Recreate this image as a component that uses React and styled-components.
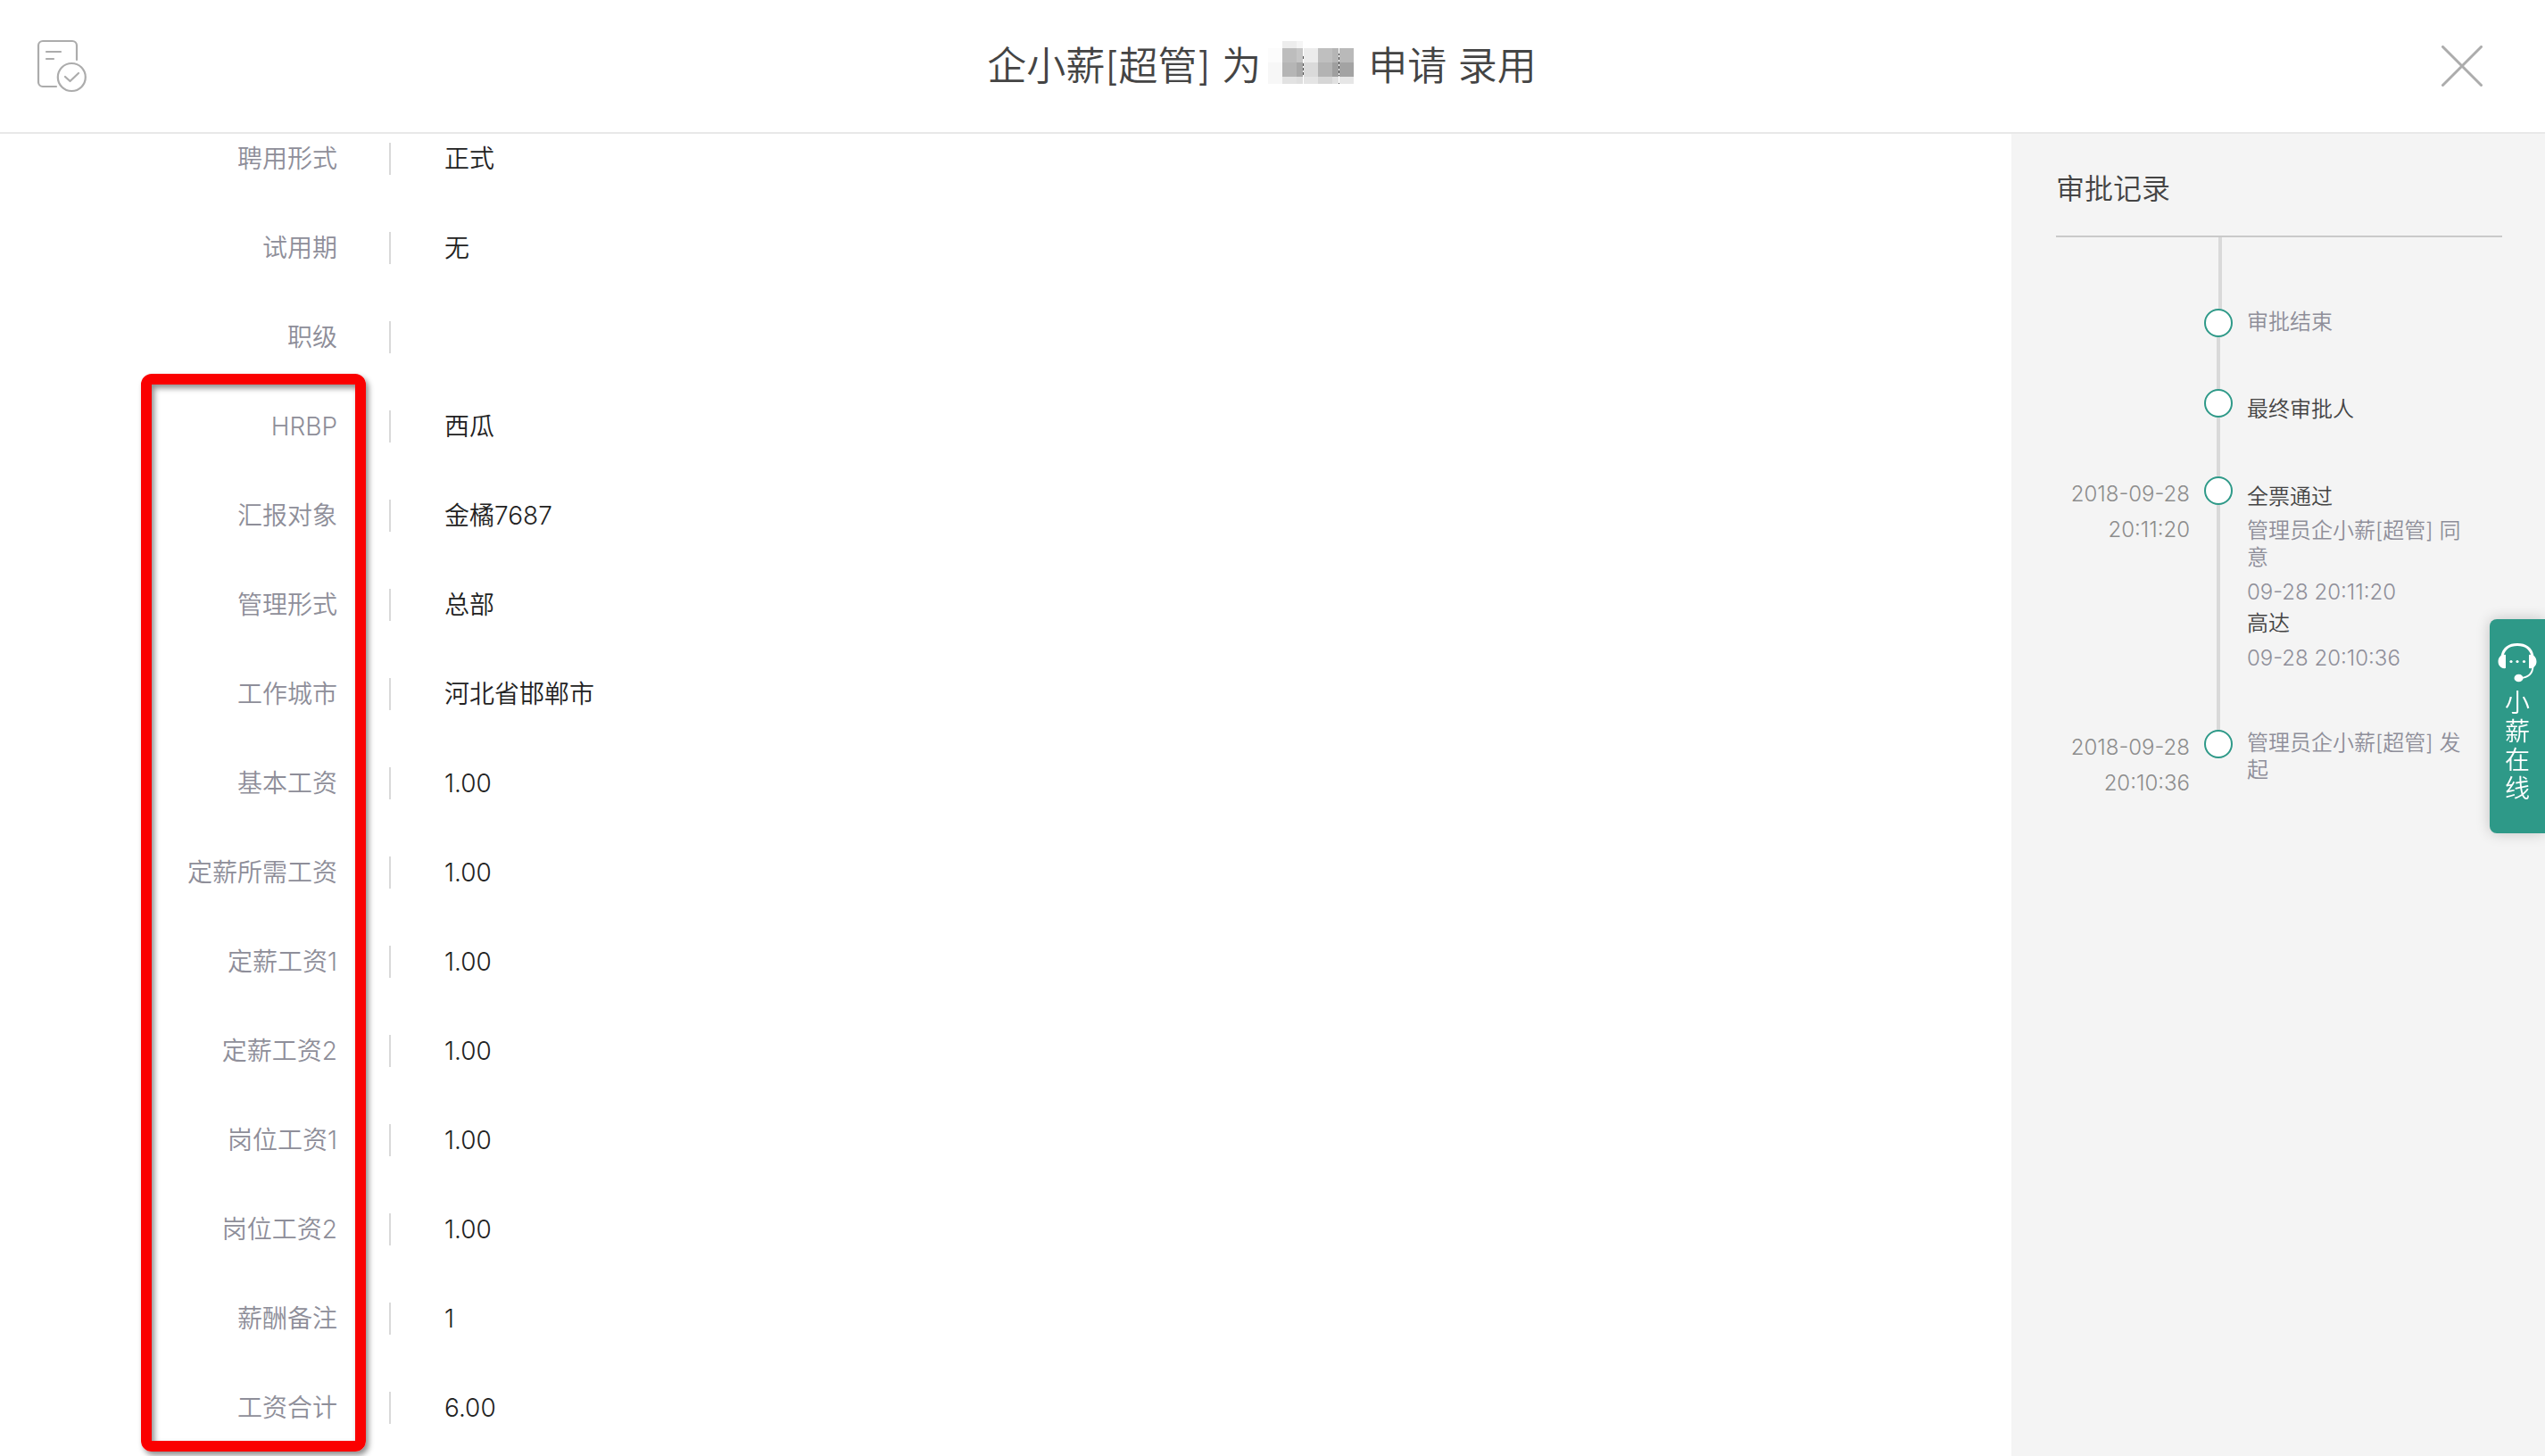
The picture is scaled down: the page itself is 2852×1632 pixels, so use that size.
import React from 'react';
import styled, { createGlobalStyle } from 'styled-components';

const GlobalStyle = createGlobalStyle`
  * {
    box-sizing: border-box;
  }

  body {
    margin: 0;
    background: #fff;
    color: #222;
    font-family: Inter, 'Noto Sans CJK SC', sans-serif;
    font-size: 28px;
    font-weight: 350;
  }
`;

const Page = styled.div`
  display: flex;
  flex-direction: column;
  min-height: 100vh;
`;

const Header = styled.header`
  display: flex;
  align-items: center;
  height: 150px;
  padding: 0 70px 0 40px;
  border-bottom: 2px solid #e8e8e8;
`;

const IconButton = styled.button`
  display: flex;
  padding: 0;
  border: 0;
  background: none;
  color: #acacac;
  cursor: pointer;
`;

const Title = styled.h1`
  display: flex;
  flex: 1;
  align-items: center;
  justify-content: center;
  gap: 8px;
  margin: 0;
  padding-right: 8px;
  color: #444;
  font-size: 44px;
  font-weight: 350;
  line-height: 60px;
`;

const Mask = styled.svg`
  margin: 0 8px 8px 0;
`;

const Body = styled.div`
  display: flex;
  flex: 1;
`;

const Main = styled.main`
  display: flex;
  flex: 1;
  flex-direction: column;
  gap: 64px;
  padding-top: 10px;
`;

const FieldList = styled.dl`
  position: relative;
  display: flex;
  flex-direction: column;
  gap: 64px;
  margin: 0;
`;

const Field = styled.div`
  display: flex;
  height: 36px;
  line-height: 36px;
`;

const FieldLabel = styled.dt`
  width: 438px;
  padding-right: 58px;
  border-right: 2px solid #d9d9d9;
  color: #8e8e99;
  text-align: right;
`;

const FieldValue = styled.dd`
  margin: 0 0 0 60px;
`;

const Highlight = styled.div`
  position: absolute;
  top: -41px;
  bottom: -31px;
  left: 158px;
  width: 252px;
  border: 12px solid #fa0000;
  border-radius: 12px;
  box-shadow: 3px 4px 6px rgba(0, 0, 0, 0.45), inset 3px 4px 6px rgba(0, 0, 0, 0.45);
  pointer-events: none;
`;

const Sidebar = styled.aside`
  width: 598px;
  padding: 0 48px 0 50px;
  background: #f4f4f4;
`;

const SidebarTitle = styled.h2`
  margin: 0;
  padding: 40px 0 30px;
  border-bottom: 2px solid #c9c9c9;
  color: #444;
  font-size: 32px;
  font-weight: 350;
  line-height: 44px;
`;

const Lead = styled.div`
  width: 4px;
  height: 80px;
  margin-left: 182px;
  background: #d9d9d9;
`;

const Timeline = styled.ol`
  margin: 0;
  padding: 0;
  list-style: none;
  font-size: 24px;
  line-height: 30px;
`;

const Step = styled.li`
  display: grid;
  grid-template-columns: 150px 32px 1fr;
  column-gap: 16px;
`;

const StepDate = styled.time`
  color: #8c8c8c;
  line-height: 40px;
  text-align: right;
`;

const Track = styled.div`
  display: flex;
  flex-direction: column;
  align-items: center;
`;

const Dot = styled.span`
  width: 32px;
  height: 32px;
  border: 2px solid #2e9988;
  border-radius: 50%;
  background: #fff;
`;

const Line = styled.span`
  flex: 1;
  width: 4px;
  background: #d9d9d9;
`;

const StepContent = styled.div`
  padding: 0 32px 60px 0;
  color: #8e8e99;
`;

const StepTitle = styled.div`
  padding-top: 8px;
  color: #444;
`;

const StepResult = styled.div`
  margin-top: 8px;
`;

const StepName = styled.div`
  color: #444;
`;

const StepTime = styled.div`
  margin-top: 4px;
  line-height: 40px;
`;

const SupportTab = styled.button`
  position: fixed;
  top: 694px;
  right: 0;
  display: flex;
  flex-direction: column;
  align-items: center;
  gap: 6px;
  width: 62px;
  height: 240px;
  padding: 26px 0 0;
  border: 0;
  border-radius: 8px 0 0 8px;
  background: #2e9988;
  box-shadow: 0 0 16px rgba(0, 0, 0, 0.2);
  color: #fff;
  font-family: inherit;
  font-size: 28px;
  font-weight: 350;
  line-height: 32px;
  cursor: pointer;
`;

const SupportText = styled.span`
  width: 28px;
`;

const fields = [
  ['聘用形式', '正式'],
  ['试用期', '无'],
  ['职级', ''],
];

const salaryFields = [
  ['HRBP', '西瓜'],
  ['汇报对象', '金橘7687'],
  ['管理形式', '总部'],
  ['工作城市', '河北省邯郸市'],
  ['基本工资', '1.00'],
  ['定薪所需工资', '1.00'],
  ['定薪工资1', '1.00'],
  ['定薪工资2', '1.00'],
  ['岗位工资1', '1.00'],
  ['岗位工资2', '1.00'],
  ['薪酬备注', '1'],
  ['工资合计', '6.00'],
];

// x, y, width, height, colour
const mosaic = [
  [0, 8, 16, 16, '#fcfcfc'],
  [0, 24, 16, 24, '#f7f7f7'],
  [16, 0, 16, 8, '#ededed'],
  [32, 0, 7, 8, '#f5f5f5'],
  [16, 8, 16, 16, '#bdbdbd'],
  [32, 8, 7, 16, '#c6c6c6'],
  [39, 8, 17, 16, '#ececec'],
  [56, 8, 16, 16, '#bfbfbf'],
  [72, 8, 7, 16, '#b5b5b5'],
  [79, 8, 17, 16, '#b9b9b9'],
  [16, 24, 16, 16, '#b5b5b5'],
  [32, 24, 7, 16, '#a8a8a8'],
  [39, 24, 17, 16, '#dadada'],
  [56, 24, 16, 16, '#b3b3b3'],
  [72, 24, 7, 16, '#9f9f9f'],
  [79, 24, 17, 16, '#a3a3a3'],
  [16, 40, 16, 8, '#e2e2e2'],
  [32, 40, 7, 8, '#dedede'],
  [39, 40, 17, 8, '#e4e4e4'],
  [56, 40, 16, 8, '#d6d6d6'],
  [72, 40, 7, 8, '#e0e0e0'],
  [79, 40, 17, 8, '#e6e6e6'],
];

const RecordIcon = () => (
  <svg width="60" height="62" viewBox="40 43 60 62" fill="none" stroke="currentColor" strokeWidth="2.2" strokeLinecap="round" strokeLinejoin="round">
    <path d="M86 67V51a5 5 0 0 0-5-5H48a5 5 0 0 0-5 5v41a5 5 0 0 0 5 5h15" />
    <path d="M52 58h16M52 66h8" />
    <circle cx="80.300" cy="86.500" r="15.500" />
    <path d="M73 86l5.500 5L88 82" />
  </svg>
);

const CloseIcon = () => (
  <svg width="46" height="46" viewBox="0 0 46 46" fill="none" stroke="currentColor" strokeWidth="3" strokeLinecap="round">
    <path d="M1.500 1.500l43 43M44.500 1.500l-43 43" />
  </svg>
);

const HeadsetIcon = () => (
  <svg width="44" height="46" viewBox="0 0 44 46" fill="none">
    <path d="M5 15C7 7 13 2.500 22 2.500S37 7 39 15" stroke="#fff" strokeWidth="3" />
    <path d="M9 14v15C4 30 .500 26 .500 21.500S4 13 9 14zM35 14v15c5 1 8.500-3 8.500-7.500S40 13 35 14z" fill="#fff" />
    <path d="M39.500 27c-.5 8-5 12.500-14 13" stroke="#fff" strokeWidth="2" />
    <ellipse cx="23.500" cy="40" rx="5" ry="4.300" fill="#fff" />
    <circle cx="15" cy="21.500" r="1.600" fill="#fff" />
    <circle cx="22" cy="21.500" r="1.600" fill="#fff" />
    <circle cx="29.500" cy="21.500" r="1.600" fill="#fff" />
  </svg>
);

const MaskedName = () => (
  <Mask width="96" height="48" viewBox="0 0 96 48" shapeRendering="crispEdges">
    {mosaic.map(([x, y, width, height, fill]) => (
      <rect key={`${x}-${y}`} x={x} y={y} width={width} height={height} fill={fill} />
    ))}
    <path d="M39.500 8v40M79.500 8v40" stroke="#fff" />
    <path d="M39.500 17v3M39.500 25v3M39.500 30v3M39.500 35v3M79.500 14v2M79.500 18v3M79.500 23v3M79.500 28v3M79.500 33v3M79.500 38v1M79.500 47v1" stroke="#555" />
  </Mask>
);

const FieldRows = ({ items }) =>
  items.map(([label, value]) => (
    <Field key={label}>
      <FieldLabel>{label}</FieldLabel>
      <FieldValue>{value}</FieldValue>
    </Field>
  ));

const TimelineStep = ({ date, time, last, children }) => (
  <Step>
    <StepDate>
      {date}
      <br />
      {time}
    </StepDate>
    <Track>
      <Dot />
      {!last && <Line />}
    </Track>
    <StepContent>{children}</StepContent>
  </Step>
);

const App = () => (
  <>
    <GlobalStyle />
    <Page>
      <Header>
        <IconButton type="button" aria-label="审批记录">
          <RecordIcon />
        </IconButton>
        <Title>
          <span>企小薪[超管] 为</span>
          <MaskedName />
          <span>申请 录用</span>
        </Title>
        <IconButton type="button" aria-label="关闭">
          <CloseIcon />
        </IconButton>
      </Header>
      <Body>
        <Main>
          <FieldList>
            <FieldRows items={fields} />
          </FieldList>
          <FieldList>
            <FieldRows items={salaryFields} />
            <Highlight />
          </FieldList>
        </Main>
        <Sidebar>
          <SidebarTitle>审批记录</SidebarTitle>
          <Lead />
          <Timeline>
            <TimelineStep>审批结束</TimelineStep>
            <TimelineStep>
              <StepTitle>最终审批人</StepTitle>
            </TimelineStep>
            <TimelineStep date="2018-09-28" time="20:11:20">
              <StepTitle>全票通过</StepTitle>
              <StepResult>管理员企小薪[超管] 同意</StepResult>
              <StepTime>09-28 20:11:20</StepTime>
              <StepName>高达</StepName>
              <StepTime>09-28 20:10:36</StepTime>
            </TimelineStep>
            <TimelineStep date="2018-09-28" time="20:10:36" last>
              管理员企小薪[超管] 发起
            </TimelineStep>
          </Timeline>
        </Sidebar>
      </Body>
      <SupportTab type="button">
        <HeadsetIcon />
        <SupportText>小薪在线</SupportText>
      </SupportTab>
    </Page>
  </>
);

export default App;
